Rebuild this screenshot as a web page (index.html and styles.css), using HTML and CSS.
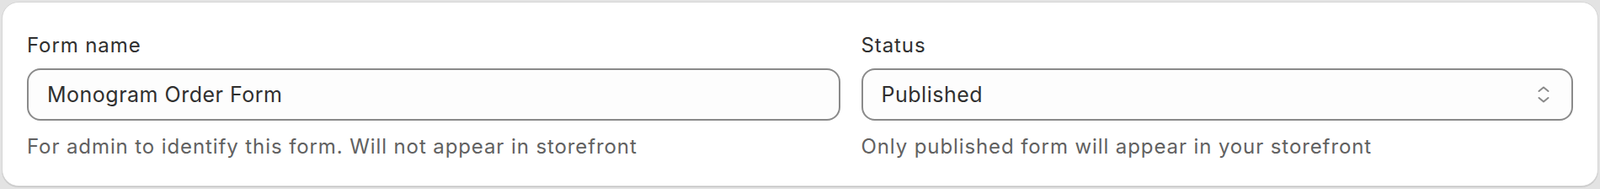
FILE: index.html
```html
<!DOCTYPE html>
<html>
<head>
<link rel="stylesheet" href="styles.css">
</head>
<body>
  <div class="card">
    <div class="form-grid">
      <div class="form-field">
        <label class="field-label" for="form-name">Form name</label>
        <div class="text-input">
          <input type="text" id="form-name" value="Monogram Order Form">
        </div>
        <div class="help-text">For admin to identify this form. Will not appear in storefront</div>
      </div>
      <div class="form-field">
        <label class="field-label" for="form-status">Status</label>
        <div class="select-input" id="form-status">
          <span>Published</span>
          <svg class="select-icon" width="14" height="22" viewBox="0 0 14 22">
            <path d="M1.5 7 L7 2.5 L12.5 7" fill="none" stroke="#8a8a8a" stroke-width="2" stroke-linecap="round" stroke-linejoin="round"/>
            <path d="M1.5 15 L7 19.5 L12.5 15" fill="none" stroke="#8a8a8a" stroke-width="2" stroke-linecap="round" stroke-linejoin="round"/>
          </svg>
        </div>
        <div class="help-text">Only published form will appear in your storefront</div>
      </div>
    </div>
  </div>
</body>
</html>
```

FILE: styles.css
```css
/* Page + card */
body {
  margin: 0;
  padding: 2px 2px 3px 2px;
  background-color: #e3e3e3;
  font-family: Inter, "Noto Sans", sans-serif;
}

.card {
  background-color: #fff;
  border: 1px solid #d6d6d6;
  border-radius: 20px;
  padding: 36px 29px 31px 29px;
  box-shadow: 0 1px 0 #c9c9c9;
}

.form-grid {
  display: grid;
  grid-template-columns: 965fr 845fr;
  gap: 25px;
}

/* Labels and help text */
.field-label {
  display: block;
  font-size: 24px;
  line-height: 30px;
  letter-spacing: 0.9px;
  color: #303030;
  margin-bottom: 12px;
}

.help-text {
  font-size: 24px;
  line-height: 30px;
  letter-spacing: 0.9px;
  color: #616161;
  margin-top: 16px;
}

/* Inputs */
.text-input,
.select-input {
  box-sizing: border-box;
  height: 62px;
  border: 2px solid #8a8a8a;
  border-radius: 16px;
  background-color: #fdfdfd;
  display: flex;
  align-items: center;
  padding: 0 22px;
  font-size: 25px;
  letter-spacing: 0.5px;
  color: #303030;
}

.text-input input {
  border: none;
  outline: none;
  background: transparent;
  width: 100%;
  padding: 0;
  font-family: inherit;
  font-size: 25px;
  letter-spacing: 0.5px;
  color: #303030;
}

.select-input {
  justify-content: space-between;
  padding-right: 26px;
}

.select-icon {
  display: block;
}
```
